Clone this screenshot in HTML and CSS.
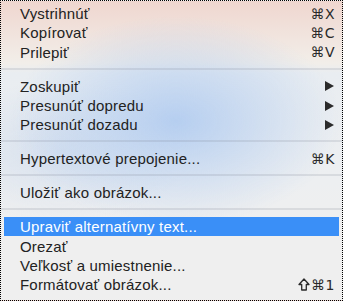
FILE: index.html
```html
<!DOCTYPE html>
<html lang="sk">
<head>
    <meta charset="UTF-8">
    <meta name="viewport" content="width=device-width, initial-scale=1.0">
    <title>Kontextová ponuka</title>
    <link rel="stylesheet" href="styles.css">
</head>
<body>
    <div class="frame">
        <ul class="menu">
            <li class="item"><span class="label">Vystrihnúť</span><span class="key">⌘X</span></li>
            <li class="item"><span class="label">Kopírovať</span><span class="key">⌘C</span></li>
            <li class="item"><span class="label">Prilepiť</span><span class="key">⌘V</span></li>
            <li class="sep"></li>
            <li class="item"><span class="label">Zoskupiť</span><svg class="arrow" width="9" height="10" viewBox="0 0 9 10"><polygon points="0,0 9,5 0,10" /></svg></li>
            <li class="item"><span class="label">Presunúť dopredu</span><svg class="arrow" width="9" height="10" viewBox="0 0 9 10"><polygon points="0,0 9,5 0,10" /></svg></li>
            <li class="item"><span class="label">Presunúť dozadu</span><svg class="arrow" width="9" height="10" viewBox="0 0 9 10"><polygon points="0,0 9,5 0,10" /></svg></li>
            <li class="sep"></li>
            <li class="item"><span class="label">Hypertextové prepojenie...</span><span class="key">⌘K</span></li>
            <li class="sep"></li>
            <li class="item"><span class="label">Uložiť ako obrázok...</span></li>
            <li class="sep"></li>
            <li class="item active"><span class="label">Upraviť alternatívny text...</span></li>
            <li class="item"><span class="label">Orezať</span></li>
            <li class="item"><span class="label">Veľkosť a umiestnenie...</span></li>
            <li class="item"><span class="label">Formátovať obrázok...</span><span class="key"><svg class="shift" width="12" height="13" viewBox="0 0 12 13"><path d="M6 1 L11 6.5 H8.3 V12 H3.7 V6.5 H1 Z" /></svg>⌘1</span></li>
        </ul>
    </div>
</body>
</html>
```

FILE: styles.css
```css
body {
    margin: 0;
    font-family: "Liberation Sans", Arial, "DejaVu Sans", sans-serif;
}
.frame {
    width: 343px;
    height: 301px;
    box-sizing: border-box;
    border: 1px dotted #000;
    overflow: hidden;
    background:
        radial-gradient(ellipse 165px 105px at 175px 120px, rgba(176, 203, 240, 0.9), rgba(176, 203, 240, 0) 100%),
        radial-gradient(ellipse 130px 70px at 60px 150px, rgba(200, 215, 236, 0.6), rgba(200, 215, 236, 0) 100%),
        linear-gradient(to bottom, #efd6cf 0, #f1e6e0 40px, #f2eee9 62px, #e9edf1 72px, #edeff1 180px, #efefef 230px, #efefef 100%);
}
.menu {
    list-style: none;
    margin: 0;
    padding: 3px 0 0;
}
.item {
    display: flex;
    align-items: center;
    height: 19.3px;
    margin: 0 3px;
    padding: 0 4px 0 16px;
    font-size: 15px;
    color: #222;
}
.label {
    flex: 1;
    white-space: nowrap;
    letter-spacing: 0.2px;
}
.key {
    display: flex;
    align-items: center;
    color: #2a2a2a;
    font-family: "DejaVu Sans", sans-serif;
    font-size: 14px;
    letter-spacing: 0.5px;
}
.shift {
    fill: none;
    stroke: #2a2a2a;
    stroke-width: 1.3;
    stroke-linejoin: round;
    margin-right: 1px;
}
.arrow {
    fill: #2b2b2b;
    margin-right: 1px;
}
.active {
    background: #3a8ff7;
    color: #fff;
}
.sep {
    height: 2px;
    margin: 6px 0 6.7px;
    background: rgba(120, 130, 145, 0.18);
}
```
